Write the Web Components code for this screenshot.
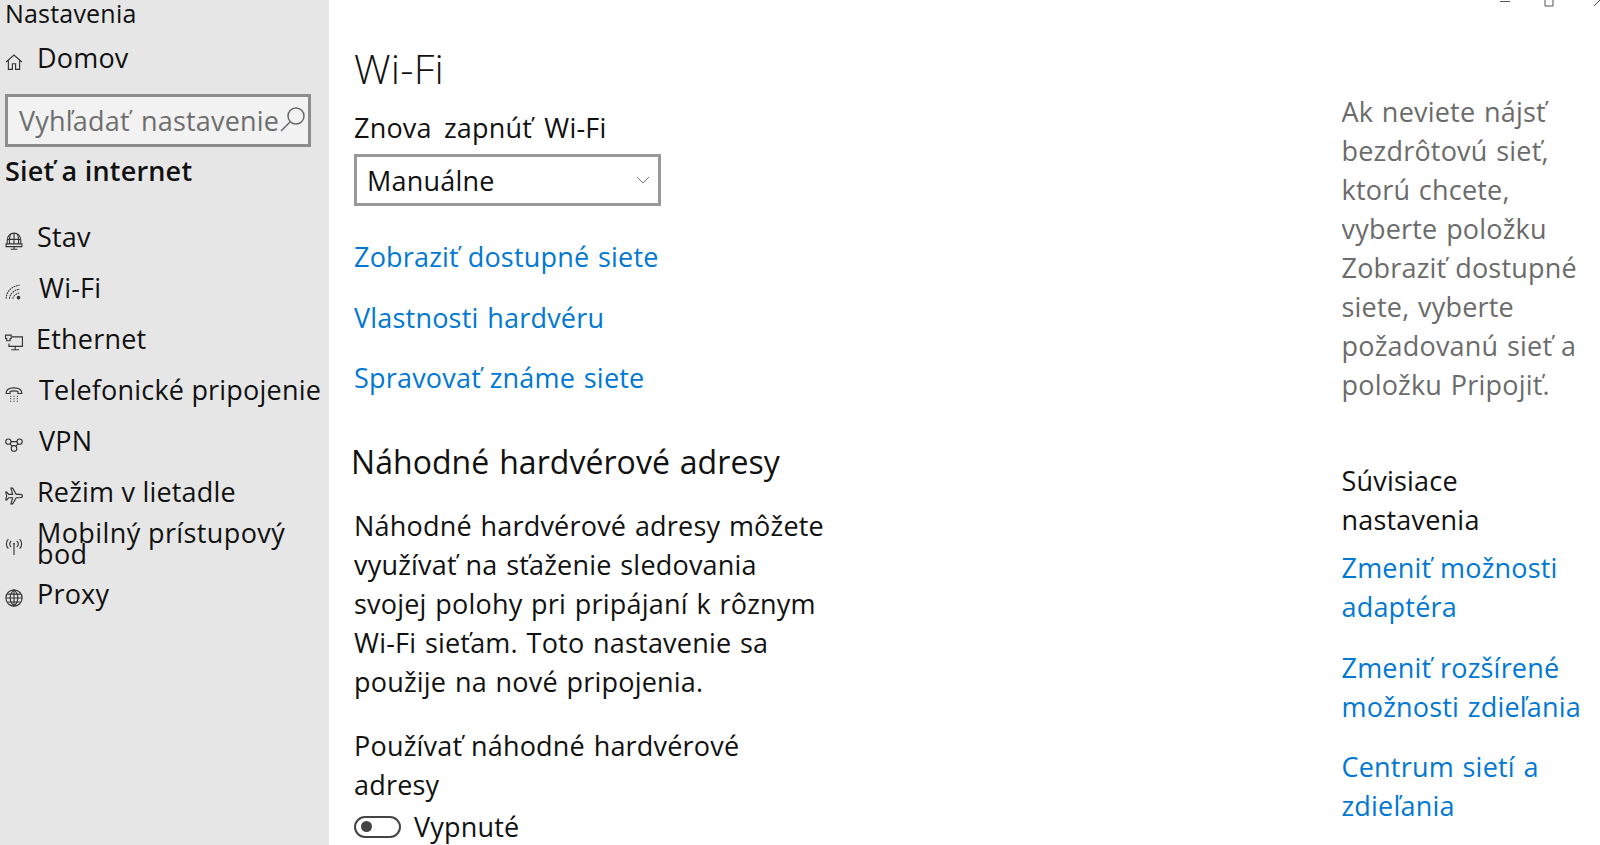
<!doctype html>
<html lang="sk">
<head>
<meta charset="utf-8">
<title>Nastavenia</title>
<style>
  html, body { margin: 0; height: 845px; overflow: hidden; background: #fff; }
  body { font: 27px/39px "Open Sans", "Noto Sans", sans-serif; font-kerning: none; letter-spacing: .2px; color: #111; display: flex; }
</style>
</head>
<body>
<settings-sidebar>
  <nav-item icon="home" slot="home" pad="37">Domov</nav-item>
  <search-box slot="search" placeholder="Vyhľadať nastavenie"></search-box>
  <nav-item icon="status" pad="37">Stav</nav-item>
  <nav-item icon="wifi" pad="39">Wi-Fi</nav-item>
  <nav-item icon="ethernet" pad="36">Ethernet</nav-item>
  <nav-item icon="dialup" pad="39">Telefonické pripojenie</nav-item>
  <nav-item icon="vpn" pad="39">VPN</nav-item>
  <nav-item icon="plane" pad="37">Režim v lietadle</nav-item>
  <nav-item icon="hotspot" pad="37" tight>Mobilný prístupový<br>bod</nav-item>
  <nav-item icon="globe" pad="37">Proxy</nav-item>
</settings-sidebar>

<wifi-page>
  <link-row>Zobraziť dostupné siete</link-row>
  <link-row>Vlastnosti hardvéru</link-row>
  <link-row>Spravovať známe siete</link-row>
</wifi-page>

<help-panel></help-panel>
<window-controls></window-controls>

<script>
// Small outline icons for the sidebar, all on a 16x16 box.
const ICONS = {
  home: `<path d="M1 8 8 1.800 15 8M3 6.400V14.500h3.600V9.600h2.800v4.900H13V6.400"/>`,
  status: `<path d="M2 10.500V7a6 6 0 0 1 12 0v3.500"/><path d="M1 10.500h14v2.500H1zM2 6.500h12M8 1v9.500M5 1.800C4 4 3.800 7.500 4 10.500M11 1.800c1 2.200 1.200 5.700 1 8.700M8 13v2M5 15.300h6"/>`,
  wifi: `<path d="M1 14C1 8 6 2.500 13 2M4 14c0-4 4-8 9-8.400M7 14c0-2 3-5 6-5.200" stroke-dasharray="1.500 .7"/><circle cx="12" cy="13" r="1.600" fill="#333" stroke="none"/>`,
  ethernet: `<path d="M6 2.500h9.500v8.500H3.500V8.500M9 11v2.800M5.500 14h7"/><path d="M.5 1h5v3h-1v2H1.500V4H.5z"/>`,
  dialup: `<path d="M1 7.500C1 4 4 2.500 8 2.500S15 4 15 7.500h-3.500V5.800C10 5 6 5 4.500 5.800v1.700z"/><path d="M4.500 10h7M4.500 12.200h7M4.500 14.400h7" stroke-dasharray="1 2"/>`,
  vpn: `<circle cx="3" cy="5" r="2.300"/><circle cx="13" cy="5" r="2.300"/><circle cx="8" cy="11" r="2.500"/><path d="M5.300 5h5.400M4.300 7 6.500 9M11.700 7 9.500 9"/>`,
  plane: `<path d="M15.500 8c0-.9-1-1.500-2.200-1.500H10L6.800 1H5.300l1.500 5.500H3.200L1.600 4.500H.7L1.400 8 .7 11.500h.9l1.600-2h3.600L5.300 15h1.500L10 9.500h3.300c1.200 0 2.200-.6 2.200-1.500z"/>`,
  hotspot: `<path d="M8 5v10"/><circle cx="8" cy="5" r=".8" fill="#333" stroke="none"/><path d="M5.500 2.500c-1.500 1.600-1.500 4 0 5.600M10.500 2.500c1.500 1.600 1.500 4 0 5.600M3 1C.7 3.200.7 7.300 3 9.500M13 1c2.300 2.200 2.300 6.300 0 8.500"/>`,
  globe: `<circle cx="8" cy="8" r="7.200"/><path d="M.8 8h14.400M8 .8v14.400M8 .8C3.500 4.500 3.500 11.500 8 15.200M8 .8c4.500 3.700 4.500 10.700 0 14.400M2 4.500h12M2 11.500h12"/>`,
};

class SettingsSidebar extends HTMLElement {
  constructor() {
    super();
    this.attachShadow({ mode: "open" }).innerHTML = `<style>
      :host { display: flex; flex-direction: column; flex: 0 0 329px; height: 845px; background: #e6e6e6; overflow: hidden; box-sizing: border-box; }
      .app { padding: 0 0 0 5px; font-size: 25px; line-height: 26px; height: 28px; margin-bottom: 4px; }
      h2 { margin: 4px 0 21px 5px; font: 600 27px/39px "Open Sans", "Noto Sans", sans-serif; font-kerning: none; letter-spacing: .2px; }
      nav { display: flex; flex-direction: column; }
    </style>
    <div class="app">Nastavenia</div>
    <slot name="home"></slot>
    <slot name="search"></slot>
    <h2>Sieť a internet</h2>
    <nav><slot></slot></nav>`;
  }
}

class NavItem extends HTMLElement {
  constructor() {
    super();
    const icon = ICONS[this.getAttribute("icon")] || "";
    const pad = this.getAttribute("pad") || 37;
    const tight = this.hasAttribute("tight");
    this.attachShadow({ mode: "open" }).innerHTML = `<style>
      :host { display: flex; align-items: center; height: 51px; white-space: nowrap; position: relative; }
      svg { flex: none; width: 18px; height: 18px; margin: 9px 0 0 5px; fill: none; stroke: #333; stroke-width: 1; }
      .label { margin-left: ${pad - 23}px; line-height: ${tight ? "21px" : "39px"}; ${tight ? "letter-spacing: .4px;" : ""} }
    </style>
    <svg viewBox="0 0 16 16">${icon}</svg><span class="label"><slot></slot></span>`;
  }
}

class SearchBox extends HTMLElement {
  constructor() {
    super();
    const text = this.getAttribute("placeholder");
    this.attachShadow({ mode: "open" }).innerHTML = `<style>
      :host { display: flex; align-items: center; justify-content: space-between; box-sizing: border-box; width: 306px; height: 53px; margin: 11px 0 0 5px; padding: 0 2px 0 11px; background: #f2f2f2; border: 3px solid #8c8c8c; color: #6e6e6e; white-space: nowrap; word-spacing: 4px; }
      svg { flex: none; width: 26px; height: 26px; fill: none; stroke: #666; stroke-width: 1.500; margin-top: -4px; }
    </style>
    <span>${text}</span>
    <svg viewBox="0 0 26 26"><circle cx="16" cy="10" r="8"/><path d="M10 16 1 25"/></svg>`;
  }
}

class ComboBox extends HTMLElement {
  constructor() {
    super();
    this.attachShadow({ mode: "open" }).innerHTML = `<style>
      :host { display: flex; align-items: center; justify-content: space-between; box-sizing: border-box; width: 307px; height: 52px; padding: 0 8px 0 10px; background: #fff; border: 3px solid #999; }
      svg { width: 14px; height: 8px; fill: none; stroke: #777; stroke-width: 1; }
    </style>
    <slot></slot><svg viewBox="0 0 14 8"><path d="M1 1l6 6 6-6"/></svg>`;
  }
}

class ToggleSwitch extends HTMLElement {
  constructor() {
    super();
    this.attachShadow({ mode: "open" }).innerHTML = `<style>
      :host { display: flex; align-items: center; gap: 13px; height: 39px; margin-top: 3px; }
      .track { box-sizing: border-box; display: flex; align-items: center; width: 47px; height: 22px; padding-left: 5px; border: 2px solid #444; border-radius: 11px; }
      .knob { width: 11px; height: 11px; border-radius: 50%; background: #444; }
    </style>
    <span class="track"><span class="knob"></span></span><slot></slot>`;
  }
}

class LinkRow extends HTMLElement {
  constructor() {
    super();
    this.attachShadow({ mode: "open" }).innerHTML = `<style>
      :host { display: block; color: #0078d4; height: 39px; margin-bottom: 21.500px; white-space: nowrap; word-spacing: 1.500px; }
    </style><slot></slot>`;
  }
}

class WifiPage extends HTMLElement {
  constructor() {
    super();
    this.attachShadow({ mode: "open" }).innerHTML = `<style>
      :host { display: block; flex: 0 0 1013px; box-sizing: border-box; padding: 40px 0 0 25px; white-space: nowrap; overflow: hidden; height: 845px; word-spacing: 1.500px; }
      h1 { margin: 0 0 12px; font: 300 41px/56px "Open Sans", "Noto Sans", sans-serif; font-kerning: none; }
      .lbl { margin-bottom: 7px; word-spacing: 5px; }
      combo-box { margin-bottom: 31px; }
      h3 { margin: 43px 0 22px -3px; font: 400 32px/44px "Open Sans", "Noto Sans", sans-serif; font-kerning: none; letter-spacing: .05px; }
      p { margin: 0 0 25px; }
    </style>
    <h1>Wi-Fi</h1>
    <div class="lbl">Znova zapnúť Wi-Fi</div>
    <combo-box>Manuálne</combo-box>
    <slot></slot>
    <h3>Náhodné hardvérové adresy</h3>
    <p>Náhodné hardvérové adresy môžete<br>využívať na sťaženie sledovania<br>svojej polohy pri pripájaní k rôznym<br>Wi-Fi sieťam. Toto nastavenie sa<br>použije na nové pripojenia.</p>
    <div>Používať náhodné hardvérové<br>adresy</div>
    <toggle-switch>Vypnuté</toggle-switch>`;
  }
}

class HelpPanel extends HTMLElement {
  constructor() {
    super();
    this.attachShadow({ mode: "open" }).innerHTML = `<style>
      :host { display: block; flex: 1; padding-top: 92px; white-space: nowrap; overflow: hidden; height: 845px; box-sizing: border-box; word-spacing: 1.500px; margin-left: -.500px; }
      .tip { color: #6b6b6b; margin-bottom: 57px; }
      a { display: block; color: #0078d4; margin-bottom: 21.500px; }
      .hd { margin-bottom: 9px; }
    </style>
    <div class="tip">Ak neviete nájsť<br>bezdrôtovú sieť,<br>ktorú chcete,<br>vyberte položku<br>Zobraziť dostupné<br>siete, vyberte<br>požadovanú sieť a<br>položku Pripojiť.</div>
    <div class="hd">Súvisiace<br>nastavenia</div>
    <a>Zmeniť možnosti<br>adaptéra</a>
    <a>Zmeniť rozšírené<br>možnosti zdieľania</a>
    <a>Centrum sietí a<br>zdieľania</a>`;
  }
}

// Title bar buttons are cut off at the top edge of the capture.
class WindowControls extends HTMLElement {
  constructor() {
    super();
    this.attachShadow({ mode: "open" }).innerHTML = `<style>
      :host { position: absolute; top: 0; right: 0; display: block; }
      svg { display: block; width: 100px; height: 8px; fill: none; stroke: #555; stroke-width: 1; }
    </style>
    <svg viewBox="0 0 100 8"><path d="M0 1.500h10M45 0v6h8V0M94 6l6-6"/></svg>`;
  }
}

customElements.define("settings-sidebar", SettingsSidebar);
customElements.define("nav-item", NavItem);
customElements.define("search-box", SearchBox);
customElements.define("combo-box", ComboBox);
customElements.define("toggle-switch", ToggleSwitch);
customElements.define("link-row", LinkRow);
customElements.define("wifi-page", WifiPage);
customElements.define("help-panel", HelpPanel);
customElements.define("window-controls", WindowControls);
</script>
</body>
</html>
